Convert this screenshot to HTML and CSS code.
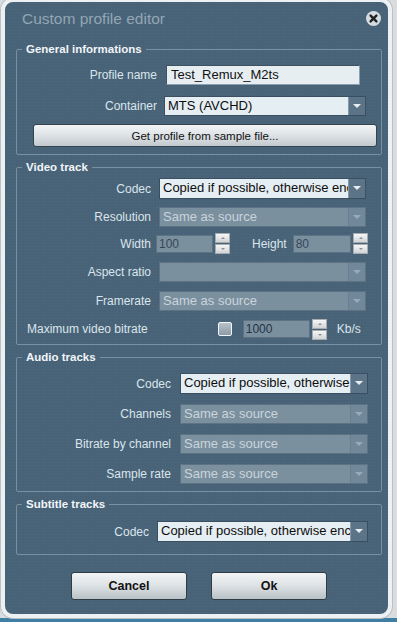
FILE: index.html
```html
<!DOCTYPE html>
<html>
<head>
<meta charset="utf-8">
<link rel="stylesheet" href="styles.css">
</head>
<body>
<div class="window">
  <div class="titlebar">
    <span class="title">Custom profile editor</span>
    <span class="close">
      <svg width="15" height="15" viewBox="0 0 15 15"><circle cx="7.5" cy="7.5" r="7.5" fill="#d5dbdf"/><path d="M4.6 4.6 L10.4 10.4 M10.4 4.6 L4.6 10.4" stroke="#1e2326" stroke-width="2.4" stroke-linecap="round"/></svg>
    </span>
  </div>

  <fieldset class="group general">
    <legend>General informations</legend>
    <div class="rows">
      <div class="row">
        <span class="lbl">Profile name</span>
        <div class="textbox">Test_Remux_M2ts</div>
      </div>
      <div class="row r-container">
        <span class="lbl">Container</span>
        <div class="select on"><span class="val">MTS (AVCHD)</span><span class="arrow"></span></div>
      </div>
    </div>
    <button class="wide">Get profile from sample file...</button>
  </fieldset>

  <fieldset class="group video">
    <legend>Video track</legend>
    <div class="rows">
      <div class="row tall">
        <span class="lbl">Codec</span>
        <div class="select on"><span class="val">Copied if possible, otherwise encoded</span><span class="arrow"></span></div>
      </div>
      <div class="row">
        <span class="lbl">Resolution</span>
        <div class="select off"><span class="val">Same as source</span><span class="arrow"></span></div>
      </div>
      <div class="row dims">
        <span class="lbl">Width</span>
        <div class="dimctl">
          <div class="num w">100</div>
          <div class="spin"><span class="up"></span><span class="down"></span></div>
          <span class="lbl hlabel">Height</span>
          <div class="num h">80</div>
          <div class="spin"><span class="up"></span><span class="down"></span></div>
        </div>
      </div>
      <div class="row aspect">
        <span class="lbl">Aspect ratio</span>
        <div class="select off"><span class="val"></span><span class="arrow"></span></div>
      </div>
      <div class="row frame">
        <span class="lbl">Framerate</span>
        <div class="select off"><span class="val">Same as source</span><span class="arrow"></span></div>
      </div>
      <div class="bitrate">
        <span class="lbl">Maximum video bitrate</span>
        <span class="check"></span>
        <div class="num br">1000</div>
        <div class="spin"><span class="up"></span><span class="down"></span></div>
        <span class="lbl unit">Kb/s</span>
      </div>
    </div>
  </fieldset>

  <fieldset class="group audio">
    <legend>Audio tracks</legend>
    <div class="rows">
      <div class="row tall">
        <span class="lbl">Codec</span>
        <div class="select on"><span class="val">Copied if possible, otherwise encoded</span><span class="arrow"></span></div>
      </div>
      <div class="row">
        <span class="lbl">Channels</span>
        <div class="select off"><span class="val">Same as source</span><span class="arrow"></span></div>
      </div>
      <div class="row">
        <span class="lbl">Bitrate by channel</span>
        <div class="select off"><span class="val">Same as source</span><span class="arrow"></span></div>
      </div>
      <div class="row">
        <span class="lbl">Sample rate</span>
        <div class="select off"><span class="val">Same as source</span><span class="arrow"></span></div>
      </div>
    </div>
  </fieldset>

  <fieldset class="group subs">
    <legend>Subtitle tracks</legend>
    <div class="rows">
      <div class="row tall">
        <span class="lbl">Codec</span>
        <div class="select on"><span class="val">Copied if possible, otherwise encoded</span><span class="arrow"></span></div>
      </div>
    </div>
  </fieldset>

  <div class="actions">
    <button class="btn">Cancel</button>
    <button class="btn">Ok</button>
  </div>
</div>
</body>
</html>
```

FILE: styles.css
```css
html, body {
  margin: 0;
  padding: 0;
}
body {
  width: 397px;
  height: 622px;
  overflow: hidden;
  background: linear-gradient(#d9dde0 0, #d9dde0 618px, #3f7fa3 618px);
  font-family: "Liberation Sans", Arial, sans-serif;
  font-size: 12px;
}
.window {
  box-sizing: border-box;
  margin: -2px 5px 0 1px;
  height: 620px;
  border: 4px solid #eef1f3;
  border-radius: 12px;
  background-color: #486378;
  background-image: radial-gradient(rgba(255,255,255,0.03) 1px, transparent 1px);
  background-size: 3px 3px;
  box-shadow: 0 0 0 1px #b9c1c7;
  display: flex;
  flex-direction: column;
}
.titlebar {
  height: 40px;
  box-sizing: border-box;
  padding: 7px 7px 0 17px;
  display: flex;
  justify-content: space-between;
  align-items: flex-start;
}
.title {
  font-size: 15.5px;
  line-height: 20px;
  color: #93a6b4;
}
.close {
  margin-top: 2px;
  width: 15px;
  height: 15px;
  display: block;
}
.close svg { display: block; }

.group {
  margin: 0 6px 0 11px;
  padding: 0 0 0 0;
  border: 1px solid #7990a2;
  border-radius: 2px;
  min-width: 0;
}
.group legend {
  margin-left: 5px;
  padding: 0 4px;
  font-weight: bold;
  font-size: 11.5px;
  line-height: 14px;
  color: #f1f5f8;
}
.rows {
  display: flex;
  flex-direction: column;
}
.row {
  display: grid;
  grid-template-columns: var(--lw) 1fr;
  column-gap: var(--cg);
  align-items: center;
  height: 20px;
}
.row.tall { height: 21px; }
.lbl {
  color: #dbe5eb;
  text-align: right;
  white-space: nowrap;
  line-height: 20px;
}

/* General */
.general {
  --lw: 140px;
  --cg: 7px;
  padding: 9px 15px 7px 0;
}
.general .rows { gap: 11px; }
.textbox {
  margin: 0 6px 0 2px;
  height: 20px;
  box-sizing: border-box;
  background: #e6eef2;
  border: 1px solid #3d5262;
  border-bottom-color: #8aa0b0;
  border-right-color: #8aa0b0;
  color: #111;
  font-size: 13px;
  line-height: 18px;
  padding-left: 4px;
}
.wide {
  display: block;
  box-sizing: border-box;
  margin: 8px 4px 0 16px;
  width: calc(100% - 5px);
  height: 23px;
  border: 1px solid #34434e;
  border-radius: 3px;
  background: linear-gradient(#f3f5f6, #dde2e5 50%, #c2c9ce);
  font-family: "Liberation Sans", Arial, sans-serif;
  font-size: 11.5px;
  color: #111;
  padding: 0;
}

/* Select */
.select {
  display: flex;
  height: 20px;
  box-sizing: border-box;
  border: 1px solid #3a5062;
  overflow: hidden;
}
.row.tall .select { height: 21px; }
.select .val {
  flex: 1;
  min-width: 0;
  overflow: hidden;
  white-space: nowrap;
  padding-left: 3px;
  font-size: 13px;
  line-height: 18px;
}
.select .arrow {
  width: 16px;
  flex: none;
  position: relative;
  border-left: 1px solid #8599aa;
}
.select .arrow::after {
  content: "";
  position: absolute;
  left: 4px;
  top: 7px;
  border-left: 4px solid transparent;
  border-right: 4px solid transparent;
  border-top: 4px solid #e9eef2;
}
.select.on { background: #e5eef3; }
.select.on .val { color: #0d0d0d; }
.select.on .arrow { background: #5b7487; }
.select.off {
  background: #7b909f;
  border-color: #5d7384;
}
.select.off .val { color: #c9d4db; }
.select.off .arrow {
  background: #71879a;
  border-left-color: #6a8091;
}
.select.off .arrow::after { border-top-color: #98aab7; }

/* Video */
.video {
  --lw: 134px;
  --cg: 8px;
  margin-top: 5px;
  padding: 4px 15px 5px 0;
}
.video .rows { gap: 8px; }
.video .dims { margin-top: -2px; }
.video .aspect { margin-top: 1px; }
.video .frame { margin-top: 1px; }
.dimctl {
  display: flex;
  align-items: center;
  margin-left: -3px;
}
.num {
  height: 18px;
  box-sizing: border-box;
  background: #7b909f;
  border: 1px solid #5d7384;
  color: #33475a;
  font-size: 12px;
  line-height: 16px;
  padding-left: 2px;
}
.num.w { width: 57px; }
.num.h { width: 58px; }
.spin {
  margin-left: 2px;
  display: flex;
  flex-direction: column;
  gap: 1px;
}
.spin span {
  display: block;
  width: 15px;
  height: 10px;
  box-sizing: border-box;
  border: 1px solid #a5adb3;
  background: linear-gradient(#f6f6f6, #d1d4d6);
  position: relative;
}
.spin span::after {
  content: "";
  position: absolute;
  left: 5px;
  top: 3px;
  border-left: 2px solid transparent;
  border-right: 2px solid transparent;
}
.spin .up::after { border-bottom: 2px solid #8b9196; }
.spin .down::after { border-top: 2px solid #8b9196; }
.hlabel {
  margin-left: 22px;
  margin-right: 6px;
}
.bitrate {
  display: flex;
  align-items: center;
  height: 20px;
  margin-top: 0;
}
.bitrate .lbl {
  margin-left: 10px;
  text-align: left;
}
.check {
  margin-left: 70px;
  width: 14px;
  height: 14px;
  box-sizing: border-box;
  border: 1px solid #f2f4f5;
  border-radius: 2px;
  background: linear-gradient(#b7c2ca, #8b9ba8);
}
.num.br {
  margin-left: 11px;
  width: 67px;
  height: 18px;
  color: #1e3448;
}
.unit {
  margin-left: 11px;
}

/* Audio */
.audio {
  --lw: 154px;
  --cg: 9px;
  margin-top: 5px;
  padding: 9px 13px 7px 0;
}
.audio .rows { gap: 10px; }

/* Subtitles */
.subs {
  --lw: 132px;
  --cg: 8px;
  margin-top: 5px;
  padding: 10px 13px 12px 0;
}

/* Buttons */
.actions {
  display: flex;
  justify-content: center;
  gap: 24px;
  margin-top: 17px;
  padding-left: 5px;
}
.btn {
  width: 116px;
  height: 28px;
  box-sizing: border-box;
  border: 1px solid #2e3c46;
  border-radius: 3px;
  background: linear-gradient(#f2f4f5, #dce1e4 50%, #b9c1c6);
  font-family: "Liberation Sans", Arial, sans-serif;
  font-weight: bold;
  font-size: 12.5px;
  color: #111;
  padding: 0;
}
```
